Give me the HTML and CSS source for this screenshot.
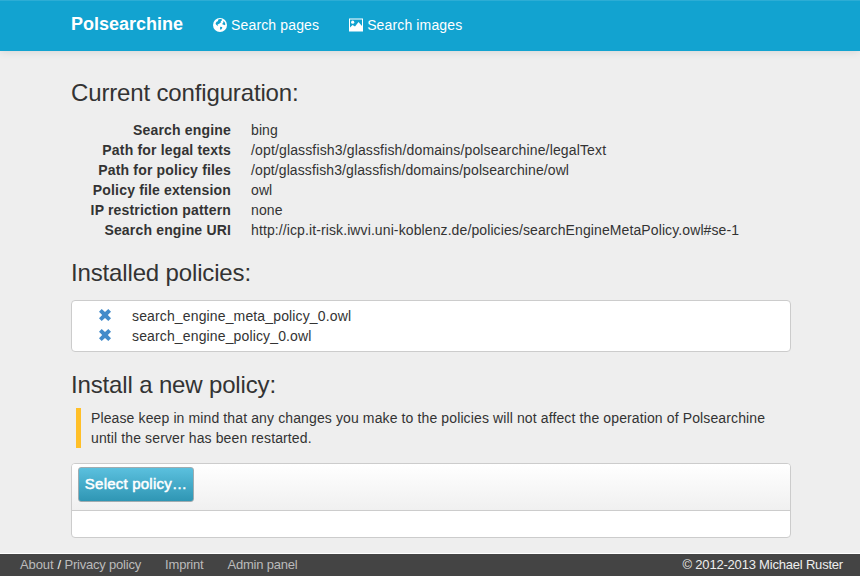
FILE: index.html
```html
<!DOCTYPE html>
<html lang="en">
<head>
<meta charset="utf-8">
<title>Polsearchine</title>
<link rel="stylesheet" href="styles.css">
</head>
<body>
<header class="navbar">
  <a class="brand">Polsearchine</a>
  <a class="nav-link"><svg class="icon" viewBox="0 0 14 14"><circle cx="7" cy="7" r="7" fill="#fff"/><path d="M5.5 1.2 8 1 9.2 1.8 8.6 2.8 7.6 3.2 8.3 4.3 6.8 5 6.2 6 4.4 6.2 5.2 7.2 4.4 7.8 3 6.6 2.6 5.2 3.6 3.8 4.8 3.2zM10.2 3 11.6 4 12.4 6.2 11.8 7.2 10.8 6.8 9.6 6.4 9.4 5.4 10.4 4.6zM7.2 8.8 9 9 9.3 10 8.2 11.6 7.4 11.8 7 10.2z" fill="#12a3d0"/></svg>Search pages</a>
  <a class="nav-link images"><svg class="icon" viewBox="0 0 14 14"><path fill="#fff" fill-rule="evenodd" d="M0 .5h14v13H0zM1 1.5V9.5l2.5-2.5L6 8.5 9.5 4 13 8V1.5z"/><circle cx="3.7" cy="4.2" r="1.6" fill="#fff"/></svg>Search images</a>
</header>
<main class="container">
  <h1>Current configuration:</h1>
  <dl>
    <dt>Search engine</dt><dd>bing</dd>
    <dt>Path for legal texts</dt><dd class="path">/opt/glassfish3/glassfish/domains/polsearchine/legalText</dd>
    <dt>Path for policy files</dt><dd>/opt/glassfish3/glassfish/domains/polsearchine/owl</dd>
    <dt>Policy file extension</dt><dd>owl</dd>
    <dt>IP restriction pattern</dt><dd>none</dd>
    <dt>Search engine URI</dt><dd>http://icp.it-risk.iwvi.uni-koblenz.de/policies/searchEngineMetaPolicy.owl#se-1</dd>
  </dl>
  <h1>Installed policies:</h1>
  <ul class="policies">
    <li><svg class="remove" viewBox="0 0 12 12"><path d="M2.7 0 6 3 9.3 0 12 2.7 8.8 6 12 9.3 9.3 12 6 9 2.7 12 0 9.3 3.2 6 0 2.7z"/></svg>search_engine_meta_policy_0.owl</li>
    <li><svg class="remove" viewBox="0 0 12 12"><path d="M2.7 0 6 3 9.3 0 12 2.7 8.8 6 12 9.3 9.3 12 6 9 2.7 12 0 9.3 3.2 6 0 2.7z"/></svg>search_engine_policy_0.owl</li>
  </ul>
  <h1>Install a new policy:</h1>
  <p class="notice">Please keep in mind that any changes you make to the policies will not affect the operation of Polsearchine until the server has been restarted.</p>
  <section class="upload">
    <div class="toolbar"><button type="button">Select policy…</button></div>
    <div class="files"></div>
  </section>
</main>
<footer>
  <nav><span><a class="about">About</a> / <a>Privacy policy</a></span><a>Imprint</a><a>Admin panel</a></nav>
  <span>© 2012-2013 Michael Ruster</span>
</footer>
</body>
</html>
```
FILE: styles.css
```css
* { box-sizing: border-box; }
body { margin: 0; height: 576px; overflow: hidden; display: flex; flex-direction: column; background: #eee; color: #333; font: 14px/20px "Liberation Sans", Arial, sans-serif; }
.navbar { height: 51px; flex: none; display: flex; align-items: center; padding: 0 71px 2px; background: #12a3d0; border-top: 1px solid #2cadd5; color: #fff; box-shadow: 0 1px 8px rgba(0, 0, 0, .1); }
.brand { font-size: 18px; font-weight: bold; margin-right: 30px; padding-bottom: 2px; }
.nav-link { display: flex; align-items: center; margin-right: 30px; letter-spacing: .14px; }
.icon { width: 14px; height: 14px; margin-right: 4px; }
.container { width: 720px; margin: 0 0 0 71px; flex: 1; }
h1 { margin: 0; font-size: 24px; font-weight: normal; line-height: 26px; letter-spacing: -.15px; }
.container > h1:first-child { margin-top: 29px; }
dl { display: grid; grid-template-columns: 160px 1fr; column-gap: 20px; margin: 14px 0 20px; }
dt { font-weight: bold; text-align: right; letter-spacing: .17px; }
dd { margin: 0; letter-spacing: .105px; }
.path { letter-spacing: .145px; }
.policies { list-style: none; margin: 14px 0 20px; padding: 5px 27px; height: 52px; border: 1px solid #ccc; border-radius: 4px; background: #fff; letter-spacing: .14px; }
li { display: flex; align-items: center; }
.remove { width: 12px; height: 12px; margin: 0 21px 2px 0; fill: #428bca; }
.notice { margin: 10px 0 15px 5px; padding: 0 10px; border-left: 5px solid #ffbf27; letter-spacing: .12px; }
.upload { height: 75px; border: 1px solid #ccc; border-radius: 4px; background: #fff; overflow: hidden; }
.toolbar { height: 47px; padding: 3px 6px; background: linear-gradient(#fff, #f0f0f0); border-bottom: 1px solid #ccc; }
button { display: block; width: 116px; height: 35px; padding: 0 0 2px; border: 1px solid #a0acb0; border-radius: 3px; background: linear-gradient(#5bc0de, #2f96b4); color: #fff; font: 15px "Liberation Sans", Arial, sans-serif; letter-spacing: .22px; -webkit-text-stroke: .5px #fff; white-space: nowrap; }
footer { height: 23px; flex: none; display: flex; align-items: center; justify-content: space-between; padding: 0 17px 0 20px; border-top: 1px solid #fff; background: #444; color: #eee; font-size: 13px; letter-spacing: -.2px; }
nav { display: flex; gap: 24px; }
footer a { color: #bbb; }
.about { letter-spacing: -.1px; margin-right: .7px; }
```
